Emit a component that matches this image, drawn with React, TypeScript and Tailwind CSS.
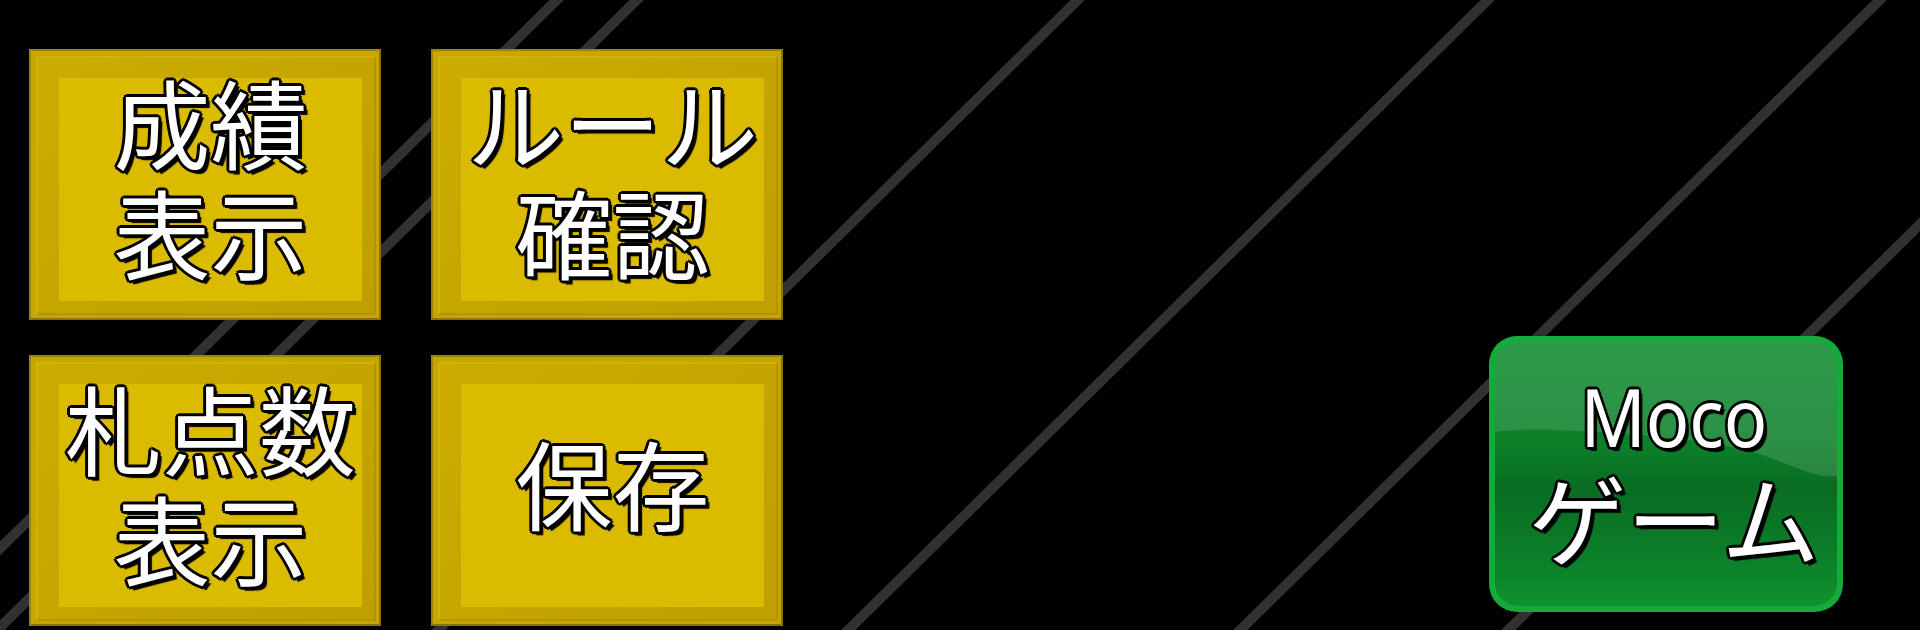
const outline =
  "[text-shadow:3px_0_0_#000,-3px_0_0_#000,0_3px_0_#000,0_-3px_0_#000,2px_2px_0_#000,-2px_2px_0_#000,2px_-2px_0_#000,-2px_-2px_0_#000,4px_4px_1px_#000]"

// x position of each stripe where it meets the top edge
const stripes = [557, 637, 1078, 1488, 1880, 2148]

function Stripes() {
  return (
    <svg className="absolute inset-0" width="1920" height="630" viewBox="0 0 1920 630">
      {stripes.map((x) => (
        <line
          key={x}
          x1={x + 20}
          y1={-20}
          x2={x - 660}
          y2={650}
          stroke="#303130"
          strokeWidth="10"
        />
      ))}
    </svg>
  )
}

function GoldButton({ lines }: { lines: string[] }) {
  return (
    <div className="border-2 border-[#9c8300] border-b-[#8a7300] border-r-[#8a7300] bg-[#c6a600] pt-[5px] pl-[5px] pr-[3px] pb-[3px]">
      <div className="h-full border-2 border-[#d3b300] border-b-[#b29500] border-r-[#b29500] bg-[linear-gradient(135deg,#ccac00,#bd9f00)] pt-[20px] pl-[21px] pr-[12px] pb-[12px]">
        <div className="flex h-full items-center justify-center bg-[#dbbb00]">
          <div
            className={`-mt-[30px] text-center text-[97px] leading-[110px] text-white font-['Noto_Sans_CJK_JP',sans-serif] whitespace-nowrap ${outline}`}
          >
            {lines.map((l) => (
              <div key={l}>{l}</div>
            ))}
          </div>
        </div>
      </div>
    </div>
  )
}

function MocoButton() {
  return (
    <div className="mb-[18px] h-[276px] w-[354px] rounded-[28px] bg-[#15ab3c] p-[6px]">
      <div className="relative h-full overflow-hidden rounded-[23px] bg-[linear-gradient(to_bottom,#0f8d2f_0%,#0c7f29_40%,#096c22_55%,#0c822a_85%,#10922f_100%)]">
        <svg className="absolute inset-0" width="342" height="264" viewBox="0 0 342 264">
          <path
            d="M0,0 H342 V134 C320,138 290,118 250,108 C200,96 120,90 60,88 C30,87 10,88 0,90 Z"
            fill="#ffffff"
            fillOpacity="0.13"
          />
        </svg>
        <div className="relative flex h-full flex-col items-center justify-center gap-[9px] pl-[16px] -mt-[4px] text-white">
          <span
            className={`inline-block scale-x-90 text-[80px] leading-[80px] font-['Noto_Sans',sans-serif] ${outline}`}
          >
            Moco
          </span>
          <span className={`text-[98px] leading-[100px] font-['Noto_Sans_CJK_JP',sans-serif] ${outline}`}>
            ゲーム
          </span>
        </div>
      </div>
    </div>
  )
}

export default function App() {
  return (
    <div className="relative h-[630px] w-[1920px] overflow-hidden bg-black">
      <Stripes />
      <div className="relative flex h-full items-end justify-between pl-[29px] pr-[77px]">
        <div className="mb-[4px] grid grid-cols-[352px_352px] grid-rows-[271px_271px] gap-x-[50px] gap-y-[35px]">
          <GoldButton lines={["成績", "表示"]} />
          <GoldButton lines={["ルール", "確認"]} />
          <GoldButton lines={["札点数", "表示"]} />
          <GoldButton lines={["保存"]} />
        </div>
        <MocoButton />
      </div>
    </div>
  )
}
